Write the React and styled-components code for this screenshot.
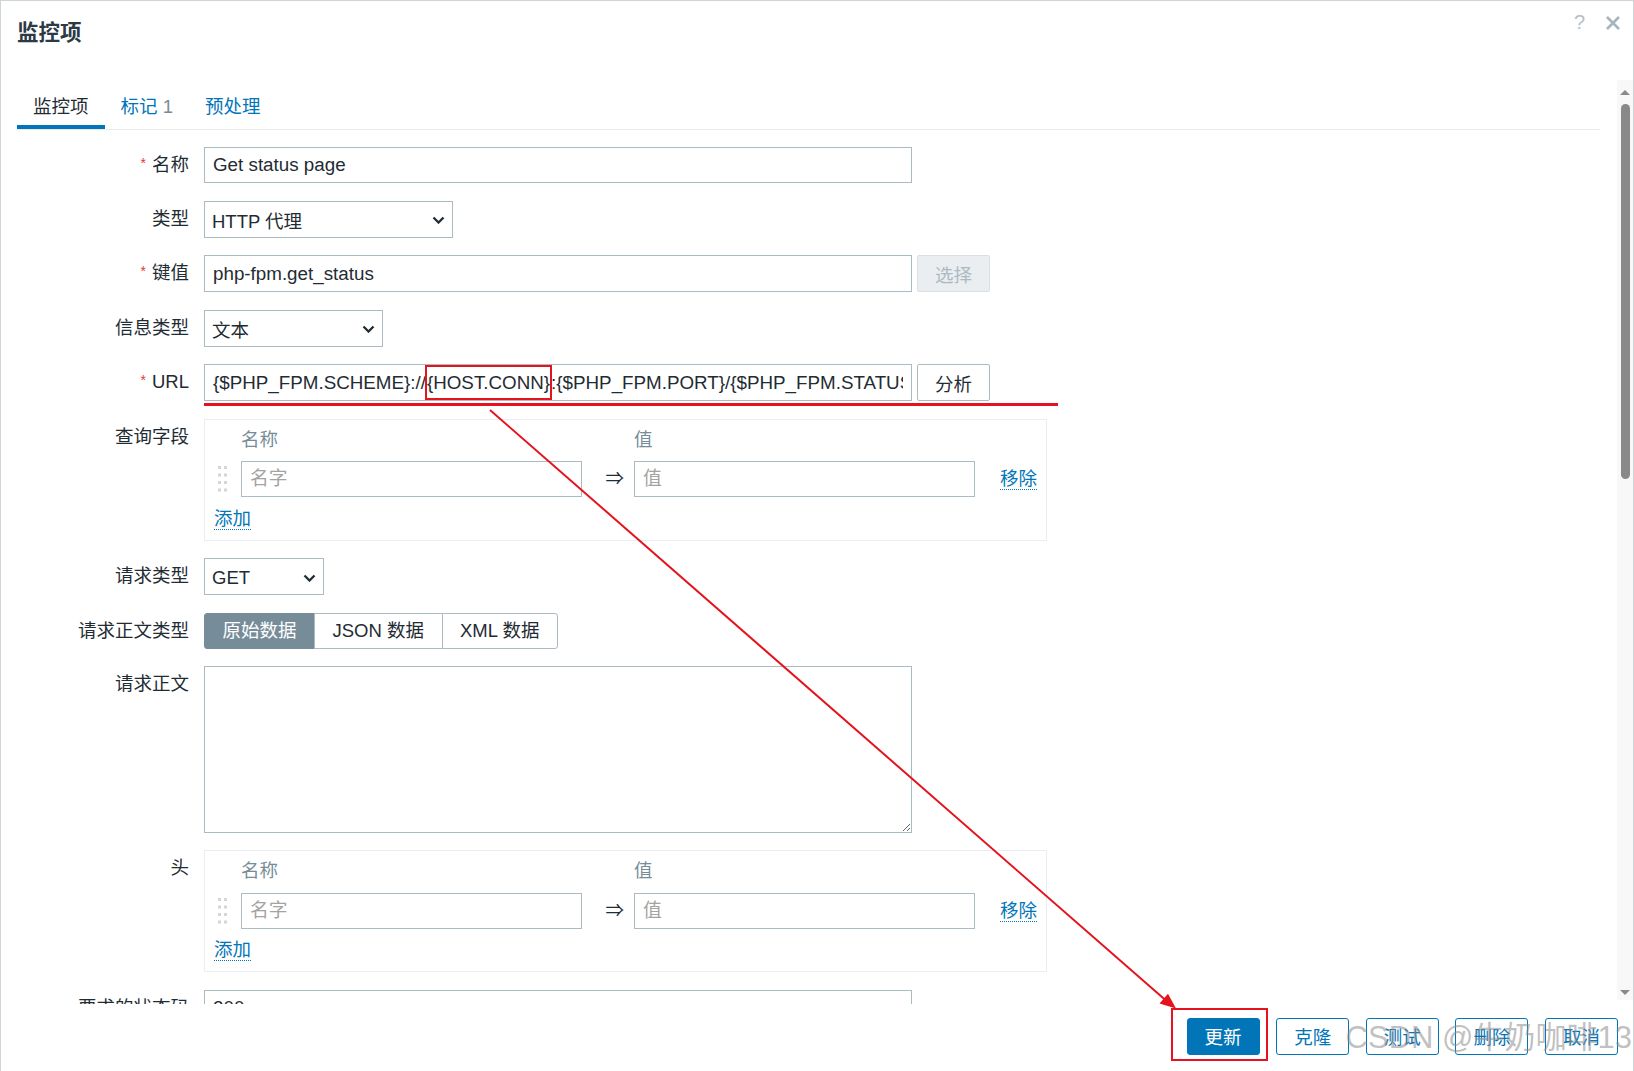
import React from 'react'
import styled, { createGlobalStyle, css } from 'styled-components'

const FONT = '"Liberation Sans", Arial, "Noto Sans CJK SC", "DejaVu Sans", sans-serif'

const GlobalStyle = createGlobalStyle`
  html, body {
    margin: 0;
    padding: 0;
    background: #fff;
  }
  body {
    font-family: ${FONT};
    font-size: 18.5px;
    color: #1f2c33;
    overflow: hidden;
  }
  *, *::before, *::after {
    box-sizing: border-box;
  }
`

function App() {
  return (
    <>
      <GlobalStyle />
      <Page>
        <Dialog>
          <Header>
            <Title>监控项</Title>
            <HeadIcons>
              <Help>?</Help>
              <svg width="16" height="14" viewBox="0 0 16 14">
                <path d="M2 1 L14 13 M14 1 L2 13" stroke="#a6b4bd" strokeWidth="2.6" fill="none" />
              </svg>
            </HeadIcons>
          </Header>

          <Body>
            <Content>
              <TabList>
                <Tab $active>监控项</Tab>
                <Tab>标记 <Count>1</Count></Tab>
                <Tab>预处理</Tab>
              </TabList>

              <FormGrid>
                <Label><Req>*</Req>名称</Label>
                <Input $w={708} $h={36} defaultValue="Get status page" />

                <Label>类型</Label>
                <Select $w={249}>HTTP 代理<Chevron /></Select>

                <Label><Req>*</Req>键值</Label>
                <Controls>
                  <Input $w={708} $h={37} defaultValue="php-fpm.get_status" />
                  <SmallButton disabled>选择</SmallButton>
                </Controls>

                <Label>信息类型</Label>
                <Select $w={179}>文本<Chevron /></Select>

                <Label><Req>*</Req>URL</Label>
                <Controls>
                  <InputBox $w={708} $h={37}>
                    <InputText>
                      {'{$PHP_FPM.SCHEME}://'}
                      <Marked>{'{HOST.CONN}'}</Marked>
                      {':{$PHP_FPM.PORT}/{$PHP_FPM.STATUS_PATH}'}
                    </InputText>
                  </InputBox>
                  <SmallButton>分析</SmallButton>
                </Controls>

                <Label>查询字段</Label>
                <KeyValueBox />

                <Label>请求类型</Label>
                <Select $w={120}>GET<Chevron /></Select>

                <Label>请求正文类型</Label>
                <SegGroup>
                  <Seg $active>原始数据</Seg>
                  <Seg>JSON 数据</Seg>
                  <Seg>XML 数据</Seg>
                </SegGroup>

                <Label>请求正文</Label>
                <TextArea />

                <Label>头</Label>
                <KeyValueBox />

                <Label>要求的状态码</Label>
                <Input $w={708} $h={36} defaultValue="200" />
              </FormGrid>
            </Content>

            <ScrollTrack>
              <svg width="10" height="5" viewBox="0 0 10 5"><path d="M0 5 L5 0 L10 5 Z" fill="#8a8a8a" /></svg>
              <Thumb />
              <BottomArrow width="10" height="5" viewBox="0 0 10 5"><path d="M0 0 L5 5 L10 0 Z" fill="#8a8a8a" /></BottomArrow>
            </ScrollTrack>
          </Body>

          <Footer>
            <ActionButton $primary>更新</ActionButton>
            <ActionButton>克隆</ActionButton>
            <ActionButton>测试</ActionButton>
            <ActionButton>删除</ActionButton>
            <ActionButton>取消</ActionButton>
          </Footer>
        </Dialog>

        <Overlay viewBox="0 0 1634 1071">
          <line x1="204" y1="404.5" x2="1058" y2="404.5" stroke="#e5131d" strokeWidth="3" />
          <line x1="490" y1="410" x2="1166" y2="1000.5" stroke="#e5131d" strokeWidth="2" />
          <polygon points="1176,1008.5 1159.5,1003.5 1168,993.8" fill="#e5131d" />
          <rect x="1172" y="1009" width="95" height="51" fill="none" stroke="#e5131d" strokeWidth="2" />
        </Overlay>

        <Watermark>CSDN @牛奶咖啡13</Watermark>
      </Page>
    </>
  )
}

function KeyValueBox() {
  return (
    <KVBox>
      <span />
      <ColHead>名称</ColHead>
      <span />
      <ColHead>值</ColHead>
      <span />
      <Grip width="9" height="26" viewBox="0 0 9 26">
        {[0, 7.5, 15, 22.5].map(y => (
          <g key={y}>
            <rect x="0" y={y} width="3" height="3" fill="#cfd7db" />
            <rect x="6" y={y} width="3" height="3" fill="#cfd7db" />
          </g>
        ))}
      </Grip>
      <Input $w={341} $h={36} placeholder="名字" />
      <Arrow>⇒</Arrow>
      <Input $w={341} $h={36} placeholder="值" />
      <RemoveLink>移除</RemoveLink>
      <AddLink>添加</AddLink>
    </KVBox>
  )
}

function Chevron() {
  return (
    <svg width="13" height="8" viewBox="0 0 13 8">
      <path d="M1.5 1.5 L6.5 6.5 L11.5 1.5" stroke="#1f2c33" strokeWidth="2.3" fill="none" />
    </svg>
  )
}

export default App

const Page = styled.div`
  position: relative;
  width: 100vw;
  height: 100vh;
  overflow: hidden;
`

const Dialog = styled.div`
  height: 100%;
  display: flex;
  flex-direction: column;
  border: 1px solid #cdd5d9;
  border-bottom: 0;
  background: #fff;
`

const Header = styled.header`
  flex: none;
  height: 79px;
  display: flex;
  justify-content: space-between;
  align-items: flex-start;
  padding: 0 12px 0 16px;
`

const Title = styled.h1`
  margin: 18px 0 0;
  font-size: 21.5px;
  line-height: 28px;
  font-weight: bold;
  color: #2b3a44;
`

const HeadIcons = styled.div`
  display: flex;
  align-items: center;
  gap: 20px;
  margin-top: 11px;
  height: 21px;
`

const Help = styled.span`
  font-size: 20px;
  line-height: 21px;
  color: #b4c0c7;
`

const Body = styled.div`
  flex: none;
  height: 924px;
  display: flex;
`

const Content = styled.div`
  flex: 1;
  min-width: 0;
  overflow: hidden;
  padding: 0 17px 0 16px;
`

const TabList = styled.div`
  display: flex;
  border-bottom: 1px solid #e6eaec;
`

const Tab = styled.div`
  padding: 16px 16px 7px;
  line-height: 22px;
  border-bottom: 4px solid ${p => (p.$active ? '#0275b8' : 'transparent')};
  color: ${p => (p.$active ? '#1f2c33' : '#0275b8')};
  white-space: nowrap;
`

const Count = styled.span`
  color: #768d99;
`

const FormGrid = styled.div`
  display: grid;
  grid-template-columns: 172px auto;
  column-gap: 15px;
  row-gap: 17.5px;
  margin-top: 17px;
  align-items: start;
  justify-items: start;
`

const Label = styled.label`
  justify-self: end;
  height: 36px;
  line-height: 36px;
  white-space: nowrap;
  color: #1f2c33;
`

const Req = styled.span`
  color: #e33734;
  font-size: 14px;
  line-height: 0;
  margin-right: 6px;
  vertical-align: 3px;
`

const Controls = styled.div`
  display: flex;
  align-items: flex-start;
  gap: 5px;
`

const fieldCss = css`
  width: ${p => p.$w}px;
  height: ${p => p.$h}px;
  border: 1px solid #acbbc2;
  border-radius: 0;
  background: #fff;
  font-family: inherit;
  font-size: 18.8px;
  color: #1f2c33;
  outline: none;
`

const Input = styled.input`
  ${fieldCss};
  padding: 0 8px;
  &::placeholder {
    color: #a3a3a3;
  }
`

const InputBox = styled.div`
  ${fieldCss};
  display: flex;
  align-items: center;
  padding: 0 8px;
`

const InputText = styled.span`
  flex: 1;
  min-width: 0;
  overflow: hidden;
  white-space: nowrap;
  line-height: 35px;
`

const Marked = styled.span`
  display: inline-block;
  line-height: 33px;
  padding: 0 1px;
  outline: 2px solid #e5131d;
  outline-offset: -1px;
`

const Select = styled.div`
  ${fieldCss};
  font-size: 18.5px;
  height: 37px;
  display: flex;
  align-items: center;
  justify-content: space-between;
  padding: 2px 7px 0 7px;
  white-space: nowrap;
`

const SmallButton = styled.button`
  width: 73px;
  height: 37px;
  padding: 0;
  font: inherit;
  border-radius: 2px;
  border: 1px solid #acbbc2;
  background: #fff;
  color: #1f2c33;
  &:disabled {
    background: #ebeef0;
    border-color: #d9dfe3;
    color: #acbbc2;
  }
`

const KVBox = styled.div`
  width: 843px;
  border: 1px solid #ebeef0;
  padding: 9px 9px 10px;
  display: grid;
  grid-template-columns: 27px 341px 52px 341px auto;
  row-gap: 10.5px;
  align-items: center;
`

const ColHead = styled.div`
  line-height: 22px;
  color: #768d99;
`

const Grip = styled.svg`
  margin-left: 4px;
`

const Arrow = styled.span`
  justify-self: end;
  margin-right: 10px;
  line-height: 22px;
  color: #1f2c33;
`

const linkCss = css`
  justify-self: start;
  line-height: 21px;
  color: #0275b8;
  border-bottom: 1px dotted #0275b8;
  cursor: pointer;
`

const RemoveLink = styled.span`
  ${linkCss};
  margin-left: 25px;
`

const AddLink = styled.span`
  ${linkCss};
  grid-column: 1 / -1;
`

const SegGroup = styled.div`
  display: flex;
  height: 36px;
`

const Seg = styled.div`
  padding: 0 17.5px;
  line-height: 34px;
  border: 1px solid ${p => (p.$active ? '#768d99' : '#acbbc2')};
  background: ${p => (p.$active ? '#768d99' : '#fff')};
  color: ${p => (p.$active ? '#fff' : '#1f2c33')};
  white-space: nowrap;
  & + & {
    margin-left: -1px;
  }
  &:first-child {
    border-radius: 3px 0 0 3px;
  }
  &:last-child {
    border-radius: 0 3px 3px 0;
  }
`

const TextArea = styled.textarea`
  display: block;
  width: 708px;
  height: 166.5px;
  border: 1px solid #acbbc2;
  border-radius: 0;
  padding: 6px 8px;
  font: inherit;
  resize: both;
  outline: none;
`

const ScrollTrack = styled.div`
  flex: none;
  width: 16px;
  margin-bottom: 4px;
  padding-top: 10px;
  background: #f8f8f8;
  display: flex;
  flex-direction: column;
  align-items: center;
`

const Thumb = styled.div`
  width: 9px;
  height: 375px;
  margin-top: 9px;
  border-radius: 5px;
  background: #898989;
`

const BottomArrow = styled.svg`
  margin-top: auto;
  margin-bottom: 5px;
`

const Footer = styled.footer`
  flex: 1;
  display: flex;
  justify-content: flex-end;
  align-items: flex-start;
  gap: 16.6px;
  padding: 14px 15px 0 0;
`

const ActionButton = styled.button`
  width: 73px;
  height: 36.5px;
  padding: 0;
  font: inherit;
  border-radius: 3px;
  border: 1px solid #0275b8;
  background: ${p => (p.$primary ? '#0275b8' : '#fff')};
  color: ${p => (p.$primary ? '#fff' : '#0275b8')};
  cursor: pointer;
`

const Overlay = styled.svg`
  position: absolute;
  left: 0;
  top: 0;
  width: 1634px;
  height: 1071px;
  pointer-events: none;
`

const Watermark = styled.div`
  position: absolute;
  right: 2px;
  top: 1020px;
  font-size: 31px;
  line-height: 36px;
  color: rgba(140, 140, 140, 0.55);
  white-space: nowrap;
  pointer-events: none;
`
